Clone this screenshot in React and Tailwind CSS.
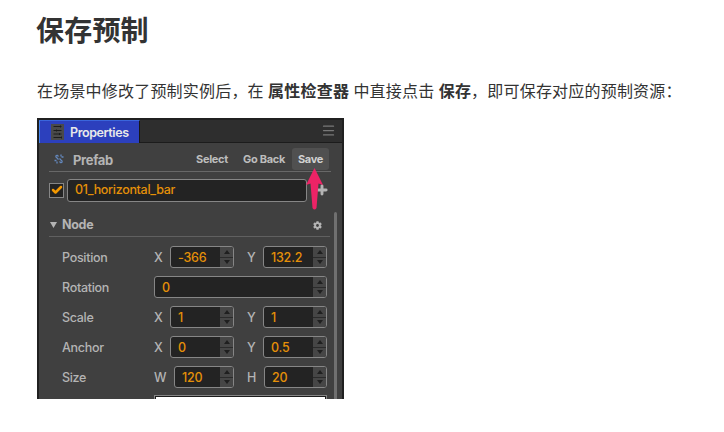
import { Menu, Check, Plus } from 'lucide-react';
import { FaCog } from 'react-icons/fa';
import clsx from 'clsx';

const rows = [
  { label: 'Position', fields: [{ axis: 'X', value: '-366' }, { axis: 'Y', value: '132.2' }] },
  { label: 'Rotation', fields: [{ value: '0' }] },
  { label: 'Scale', fields: [{ axis: 'X', value: '1' }, { axis: 'Y', value: '1' }] },
  { label: 'Anchor', fields: [{ axis: 'X', value: '0' }, { axis: 'Y', value: '0.5' }] },
  { label: 'Size', fields: [{ axis: 'W', value: '120' }, { axis: 'H', value: '20' }] },
];

function Spinner() {
  return (
    <div className="flex w-[13px] flex-col bg-[#464646]">
      <div className="flex flex-1 items-center justify-center border-b border-[#2b2b2b]">
        <svg width="6" height="4" viewBox="0 0 6 4"><path d="M0 4 3 0l3 4z" fill="#1f1f1f" /></svg>
      </div>
      <div className="flex flex-1 items-center justify-center">
        <svg width="6" height="4" viewBox="0 0 6 4"><path d="M0 0h6L3 4z" fill="#1f1f1f" /></svg>
      </div>
    </div>
  );
}

function NumberField({ axis, value }) {
  return (
    <div className={clsx('flex items-center', axis ? 'w-20' : 'w-[173px]')}>
      {axis && <span className={clsx('pt-0.5', axis === 'W' ? 'w-5' : axis === 'H' ? 'w-[17px]' : 'w-4')}>{axis}</span>}
      <div className="flex h-[22px] min-w-0 flex-1 overflow-hidden rounded-[3px] border border-[#868686] bg-[#232323]">
        <span className="flex-1 pl-[7px] leading-[21px] tracking-[-0.2px] text-[#e59008]">{value}</span>
        <Spinner />
      </div>
    </div>
  );
}

function PropertyRow({ label, fields }) {
  return (
    <div className="flex h-[30px] items-center pl-[23px]">
      <span className="w-[92px] pt-0.5">{label}</span>
      <div className="flex gap-[13px]">
        {fields.map((field) => (
          <NumberField key={field.axis || label} {...field} />
        ))}
      </div>
    </div>
  );
}

function PropertiesPanel() {
  return (
    <div className="relative mt-[14px] h-[281px] w-[307px] overflow-hidden border-x-2 border-t-2 border-[#202020] bg-[#404040] font-['Inter',sans-serif] text-[12.5px] leading-4 font-medium tracking-[-0.3px] text-[#b4b4b4]">
      <div className="flex h-[23px] justify-between border-b border-[#1c1c1c] bg-[#2e2e2e]">
        <div className="flex h-[23px] w-[101px] items-center border-t border-r border-l border-t-[#3a66dc] border-r-[#171717] border-l-[#4585ee] bg-[#2c40bd] pl-[11px] font-semibold text-[#e9e9e9]">
          <svg width="13" height="16" viewBox="0 0 13 16" className="mr-[6px]">
            <path d="M0 0h13v16H0z" fill="#4a4a4a" />
            <path d="M2.500 2.500h8M2.500 6.500h8M2.500 10h8M2.500 13.500h8" stroke="#1c1c1c" />
            <path d="M9.500 1.500v2M5.500 5.500v2M8.500 9v2M10.500 12.500v2" stroke="#1c1c1c" />
          </svg>
          <span className="pt-0.5 tracking-[-0.4px]">Properties</span>
        </div>
        <Menu size={15} strokeWidth={2} className="mt-[3px] mr-[6px] text-[#787878]" />
      </div>

      <div className="ml-[10px] flex h-[29px] w-[282px] items-center border-b border-[#686868] pt-1 font-bold">
        <svg width="10" height="10" viewBox="0 0 10 10" className="mr-[9px] ml-[5px]" fill="none" stroke="#6488bd" strokeWidth="1.3">
          <path d="M4.500 5.500 2 3q-.5-2 1.500-1.500l1 1M5.500 4.500 8 7q.5 2-1.500 1.500l-1-1" />
          <path d="M7 .5v2M9.500 3h-2M.5 6.500h2M3 9.500v-2" />
        </svg>
        <span className="w-[123px] pt-0.5 text-[13px]">Prefab</span>
        <div className="flex text-[11px] text-[#bdbdbd]">
          <span className="w-[47px] leading-[22px]">Select</span>
          <span className="w-[49px] leading-[22px]">Go Back</span>
          <span className="w-[37px] rounded-[3px] bg-[#505050] text-center leading-[22px] text-[#d2d2d2]">Save</span>
        </div>
      </div>

      <div className="flex h-[36px] items-center pl-[10px]">
        <div className="mr-[3px] flex size-[15px] items-center justify-center border border-[#868686] bg-[#232323]">
          <Check size={12} strokeWidth={5} className="text-[#f39800]" />
        </div>
        <div className="h-[23px] w-[240px] rounded-[3px] border border-[#868686] bg-[#232323] pl-[7px] leading-[20px] text-[#e59008]">
          01_horizontal_bar
        </div>
        <Plus size={14} strokeWidth={5} className="ml-2 text-[#b4b4b4]" />
      </div>

      <div className="ml-[10px] flex h-[29px] w-[281px] items-center border-b border-[#606060] pt-[5px] font-bold">
        <svg width="7" height="6" viewBox="0 0 7 6" className="mr-[5px] ml-px"><path d="M0 0h7L3.5 6z" fill="#b4b4b4" /></svg>
        <span>Node</span>
        <FaCog size={9} className="mt-0.5 mr-2 ml-auto" />
      </div>

      <div className="pt-[5px]">
        {rows.map((row) => (
          <PropertyRow key={row.label} {...row} />
        ))}
      </div>
      <div className="mt-[3px] ml-[115px] h-[22px] w-[173px] border border-[#868686] bg-[#1c1c1c] px-px pt-px">
        <div className="h-full bg-white" />
      </div>

      {/* scrollbar thumb and the pointer at Save float over the panel */}
      <div className="absolute top-[92px] right-[5px] bottom-0 w-[3px] rounded-t bg-[#707070]" />
      <svg width="17" height="43" viewBox="0 0 17 43" className="absolute top-[48px] left-[267px]">
        <path d="M8.500 0 17 17l-4.500-1.500L10.500 40q-2 3-4 0L4.500 15.500 0 17z" fill="#ed2366" />
      </svg>
    </div>
  );
}

export default function App() {
  return (
    <main className="h-[432px] w-[724px] overflow-hidden bg-white pl-[37px] font-['Noto_Sans_CJK_SC',sans-serif] text-[#333]">
      <h1 className="-ml-px pt-2 text-[28px] leading-[42px] font-bold tracking-[0.2px]">保存预制</h1>
      <p className="mt-[27px] mb-[15px] text-[16px] leading-[26px] tracking-[0.2px] whitespace-nowrap [word-spacing:0.5px]">
        在场景中修改了预制实例后，在 <strong>属性检查器</strong> 中直接点击 <strong>保存</strong>，即可保存对应的预制资源：
      </p>
      <PropertiesPanel />
    </main>
  );
}
